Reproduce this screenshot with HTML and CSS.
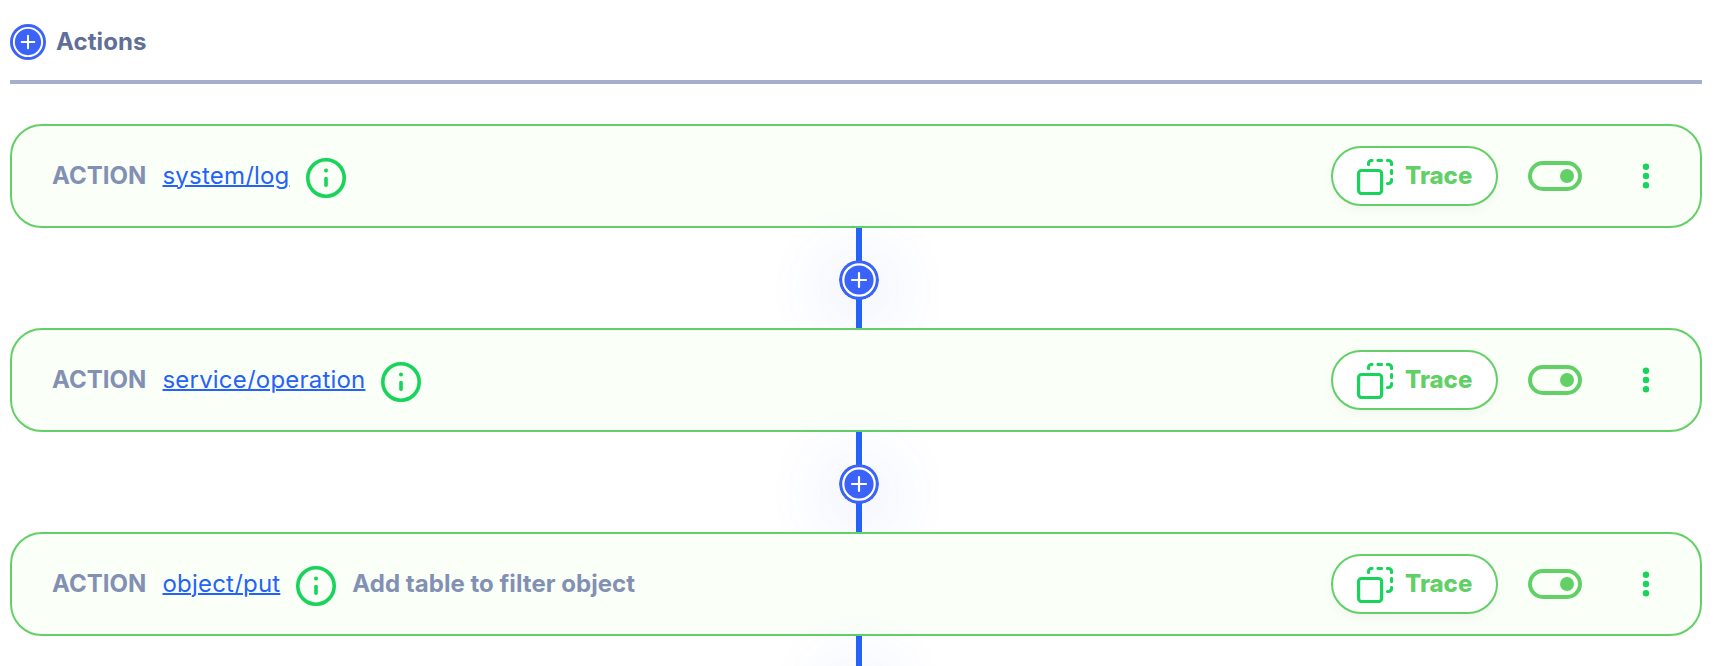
FILE: index.html
```
<!DOCTYPE html>
<html lang="en">
<head>
<meta charset="utf-8">
<title>Actions</title>
<link rel="stylesheet" href="styles.css">
</head>
<body>
<svg class="sprite" aria-hidden="true">
  <symbol id="plus" viewBox="0 0 40 40">
    <circle cx="20" cy="20" r="20" fill="#3b63f8"/>
    <circle cx="20" cy="20" r="15.700" fill="none" stroke="#fff" stroke-width="2.200"/>
    <path d="M20 13v14M13 20h14" stroke="#fff" stroke-width="2.200" stroke-linecap="round"/>
  </symbol>
  <symbol id="info" viewBox="0 0 40 40">
    <circle cx="20" cy="20" r="18.2" fill="none" stroke="#18d45a" stroke-width="3.6"/>
    <circle cx="20" cy="12.600" r="2" fill="#18d45a"/>
    <path d="M20 20.600v6.600" stroke="#18d45a" stroke-width="3.600" stroke-linecap="round"/>
  </symbol>
  <symbol id="copy" viewBox="0 0 36 36">
    <g fill="none" stroke="#18d45a" stroke-width="3.200" stroke-linecap="round">
      <rect x="1.6" y="11.5" width="23" height="23" rx="3"/>
      <path d="M11.5 5.5V4.5a3 3 0 0 1 3-3h.5M21 1.500h3.500M30.500 1.500h1a3 3 0 0 1 3 3v1M34.500 11.500v3M34.500 20.500v1a3 3 0 0 1-3 3h-1"/>
    </g>
  </symbol>
  <symbol id="dots" viewBox="0 0 8 26">
    <g fill="#18d45a"><circle cx="4" cy="3.700" r="3.200"/><circle cx="4" cy="13" r="3.200"/><circle cx="4" cy="22.300" r="3.200"/></g>
  </symbol>
</svg>

<main class="flow">
  <header class="flow-header">
    <svg class="header-plus"><use href="#plus"/></svg>
    <h1 class="title">Actions</h1>
  </header>

  <section class="card">
    <span class="kind">ACTION</span>
    <a class="link" href="#">system/log</a>
    <svg class="info"><use href="#info"/></svg>
    <div class="controls">
      <button class="trace"><svg class="copy"><use href="#copy"/></svg>Trace</button>
      <span class="toggle"></span>
      <svg class="dots"><use href="#dots"/></svg>
    </div>
  </section>
  <div class="connector"><svg class="add"><use href="#plus"/></svg></div>

  <section class="card">
    <span class="kind">ACTION</span>
    <a class="link" href="#">service/operation</a>
    <svg class="info"><use href="#info"/></svg>
    <div class="controls">
      <button class="trace"><svg class="copy"><use href="#copy"/></svg>Trace</button>
      <span class="toggle"></span>
      <svg class="dots"><use href="#dots"/></svg>
    </div>
  </section>
  <div class="connector"><svg class="add"><use href="#plus"/></svg></div>

  <section class="card">
    <span class="kind">ACTION</span>
    <a class="link" href="#">object/put</a>
    <svg class="info"><use href="#info"/></svg>
    <span class="note">Add table to filter object</span>
    <div class="controls">
      <button class="trace"><svg class="copy"><use href="#copy"/></svg>Trace</button>
      <span class="toggle"></span>
      <svg class="dots"><use href="#dots"/></svg>
    </div>
  </section>
  <div class="connector"><svg class="add"><use href="#plus"/></svg></div>
</main>
</body>
</html>
```
FILE: styles.css
```
* { box-sizing: border-box; }
html, body { height: 100%; }
body {
  margin: 0;
  overflow: hidden;
  background: #fff;
  font: 24px/32px Inter, "Liberation Sans", sans-serif;
}
.sprite { display: none; }
.flow { height: 666px; overflow: hidden; padding: 0 24px 0 10px; }
.flow-header {
  display: flex;
  align-items: center;
  gap: 10px;
  height: 84px;
  border-bottom: 4px solid #a5afcc;
  padding-top: 4px;
  margin-bottom: 40px;
}
.header-plus { width: 36px; height: 36px; }
.title { margin: 0; font-size: 24px; line-height: 32px; font-weight: 700; letter-spacing: .1px; color: #5f6f99; }
.card {
  position: relative;
  display: flex;
  align-items: center;
  height: 104px;
  padding: 0 50px 0 40px;
  border: 2px solid #62d066;
  border-radius: 32px;
  background: #fafff8;
}
.kind, .note { font-weight: 700; color: #8290b3; white-space: nowrap; }
.kind { width: 94.5px; }
.link {
  margin-left: 16px;
  letter-spacing: .2px;
  color: #2563f8;
  text-decoration: underline;
  text-decoration-thickness: 2px;
}
.info { width: 40px; height: 40px; margin: 4px 0 0 16px; }
.note { margin-left: 16px; letter-spacing: .04px; }
.controls { display: flex; align-items: center; margin-left: auto; }
.trace {
  display: flex;
  align-items: center;
  gap: 12px;
  width: 167px;
  height: 60px;
  padding: 0 0 0 24px;
  border: 2px solid #62d066;
  border-radius: 30px;
  background: #fff;
  box-shadow: 0 4px 12px rgba(0, 0, 0, .04);
  color: #62d066;
  font: 800 24px/32px Inter, "Liberation Sans", sans-serif;
}
.copy { width: 36px; height: 36px; margin-top: 2px; overflow: visible; }
.toggle {
  display: flex;
  align-items: center;
  justify-content: flex-end;
  width: 54px;
  height: 30px;
  margin: 0 60px 0 30px;
  padding-right: 4px;
  border: 4px solid #62d066;
  border-radius: 15px;
}
.toggle::after { content: ""; width: 14px; height: 14px; border-radius: 50%; background: #62d066; }
.dots { width: 8px; height: 26px; }
.connector {
  position: relative;
  display: flex;
  justify-content: center;
  align-items: center;
  width: 6px;
  height: 100px;
  margin-left: 846px;
  background: #2563f8;
}
.add {
  flex: none;
  width: 40px;
  height: 40px;
  margin-top: 4px;
  border-radius: 50%;
  box-shadow: 0 10px 70px 6px rgba(59, 99, 248, .19);
}
```
